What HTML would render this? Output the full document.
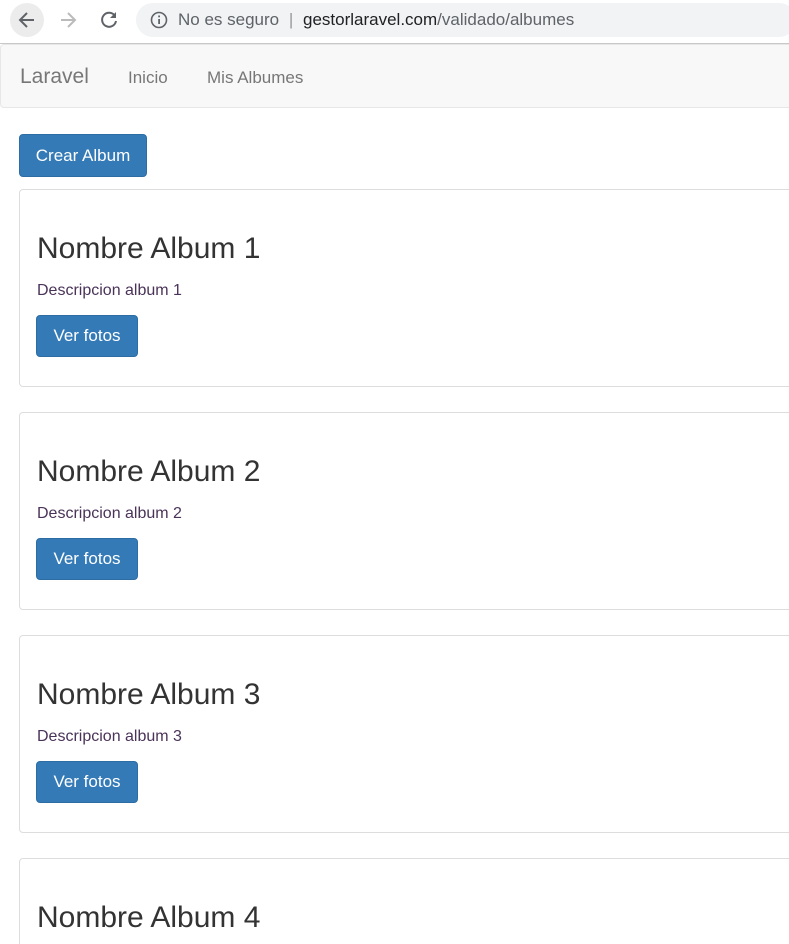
<!DOCTYPE html>
<html><head><meta charset="utf-8"><style>
html,body{margin:0;width:789px;height:944px;overflow:hidden}
body{background:#fff;font-family:"Liberation Sans",sans-serif;position:relative}
.bar{position:absolute;left:0;top:0;width:789px;height:43px;background:#fff;border-bottom:1px solid #c8c8c8}
.url{position:absolute;left:136px;top:3px;width:660px;height:34px;border-radius:17px;background:#f1f3f4}
.nav{position:absolute;left:0;top:44px;width:800px;height:64px;background:#f8f8f8;border:1px solid #e7e7e7;border-radius:4px;box-sizing:border-box}
.btn{position:absolute;background:#337ab7;border:1px solid #2e6da4;border-radius:4px;color:#fff;font-size:17px;box-sizing:border-box;text-align:center}
.card{position:absolute;left:19px;width:800px;height:198px;border:1px solid #ddd;border-radius:4px;box-sizing:border-box}
.card h2{position:absolute;left:17px;top:42px;margin:0;font-weight:normal;font-size:30px;color:#333}
.card p{position:absolute;left:17px;top:92px;margin:0;font-size:16px;color:#4a3358}
.card .btn{left:16px;top:125px;width:102px;height:42px;line-height:40px}
</style></head><body>
<div class="bar">
<div style="position:absolute;left:10px;top:3px;width:34px;height:34px;border-radius:17px;background:#ececec"></div>
<svg style="position:absolute;left:17px;top:10px" width="20" height="20"><path d="M17 10H4M10 3L3 10L10 17" stroke="#5f6368" stroke-width="2" fill="none"/></svg>
<svg style="position:absolute;left:58px;top:10px" width="20" height="20"><path d="M3 10H16M10 3L17 10L10 17" stroke="#bbb" stroke-width="2" fill="none"/></svg>
<svg style="position:absolute;left:98px;top:9px" width="22" height="22"><path d="M17 7A7 7 0 1 0 18 12" stroke="#5f6368" stroke-width="2" fill="none"/><path d="M18 3V9H12Z" fill="#5f6368"/></svg>
<div class="url"></div>
<svg style="position:absolute;left:150px;top:11px" width="18" height="18"><circle cx="9" cy="9" r="7.5" stroke="#5f6368" stroke-width="1.6" fill="none"/><rect x="8.2" y="8" width="1.8" height="5" fill="#5f6368"/><rect x="8.2" y="4.5" width="1.8" height="1.8" fill="#5f6368"/></svg>
<div style="position:absolute;left:178px;top:10px;font-size:17px;color:#5f6368;white-space:nowrap">No es seguro <span style="color:#999;margin:0 5px">|</span> <span style="color:#202124">gestorlaravel.com</span>/validado/albumes</div>
</div>
<div class="nav">
<span style="position:absolute;left:19px;top:20px;font-size:21px;color:#777">Laravel</span>
<span style="position:absolute;left:127px;top:23px;font-size:17px;color:#777">Inicio</span>
<span style="position:absolute;left:206px;top:23px;font-size:17px;color:#777">Mis Albumes</span>
</div>
<div class="btn" style="left:19px;top:134px;width:128px;height:43px;line-height:41px">Crear Album</div>
<div class="card" style="top:189px"><h2>Nombre Album 1</h2><p>Descripcion album 1</p><div class="btn">Ver fotos</div></div>
<div class="card" style="top:412px"><h2>Nombre Album 2</h2><p>Descripcion album 2</p><div class="btn">Ver fotos</div></div>
<div class="card" style="top:635px"><h2>Nombre Album 3</h2><p>Descripcion album 3</p><div class="btn">Ver fotos</div></div>
<div class="card" style="top:858px"><h2>Nombre Album 4</h2><p>Descripcion album 4</p><div class="btn">Ver fotos</div></div>
</body></html>
